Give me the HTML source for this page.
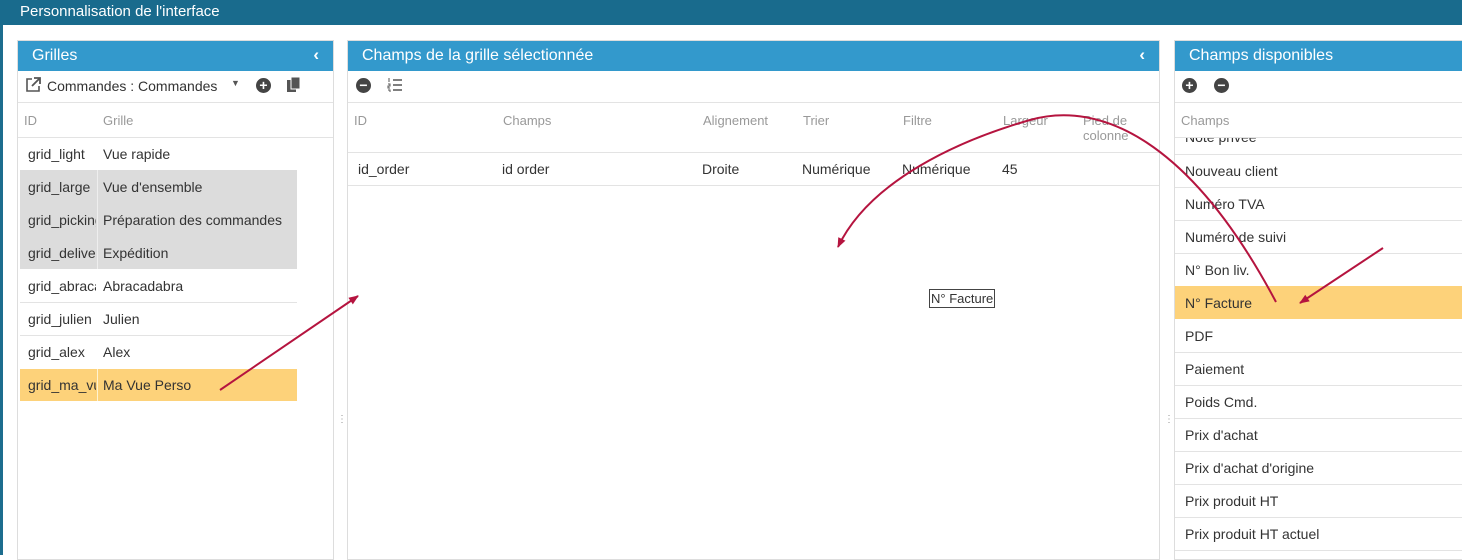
<!DOCTYPE html>
<html><head><meta charset="utf-8"><style>
*{box-sizing:border-box;margin:0;padding:0}
body{width:1462px;height:555px;overflow:hidden;background:#fff;font-family:"Liberation Sans",Arial,sans-serif;position:relative;color:#333}
.top{position:absolute;left:0;top:0;width:1462px;height:25px;background:#196b8d;color:#fff;font-size:15px;padding:3px 0 0 20px}
.edge{position:absolute;left:0;top:25px;width:3px;height:530px;background:#1d6d8e}
.panel{position:absolute;top:40px;height:520px;border:1px solid #ddd;background:#fff}
.hd{height:30px;background:#3399cc;color:#fff;font-size:16px;padding:6px 0 0 14px;position:relative}
.hd .chev{position:absolute;right:14px;top:4px;font-size:17px;font-weight:bold}
.tb{height:32px;border-bottom:1px solid #e3e3e3;position:relative;font-size:14px}
.t{position:absolute;font-size:14px;white-space:nowrap}
.g{color:#999;font-size:13px}
.line{position:absolute;height:1px;background:#e3e3e3}
.ic{position:absolute;width:15px;height:15px;border-radius:50%;background:#444;color:#fff;font-size:14px;line-height:14px;text-align:center;font-weight:bold}
</style></head><body>
<div class="top">Personnalisation de l'interface</div>
<div class="edge"></div>

<div class="panel" style="left:17px;width:317px">
 <div class="hd">Grilles<span class="chev">‹</span></div>
 <div class="tb"></div>
</div>
<svg style="position:absolute;left:25px;top:77px" width="16" height="16" viewBox="0 0 16 16"><path d="M7 2H2v12h12V9" fill="none" stroke="#555" stroke-width="1.6"/><path d="M9 1h6v6M15 1L7 9" fill="none" stroke="#555" stroke-width="1.8"/></svg>
<div class="t" style="left:47px;top:78px">Commandes : Commandes</div>
<div class="t" style="left:231px;top:78px;font-size:9px;color:#555">▼</div>
<div class="ic" style="left:256px;top:78px">+</div>
<svg style="position:absolute;left:287px;top:77px" width="14" height="16" viewBox="0 0 14 16"><rect x="0" y="3" width="9" height="12" fill="#555"/><rect x="4" y="0" width="9" height="12" fill="#555" stroke="#fff" stroke-width="1"/></svg>
<div class="t g" style="left:24px;top:113px">ID</div>
<div class="t g" style="left:103px;top:113px">Grille</div>
<div class="line" style="left:18px;top:137px;width:315px"></div>
<div style="position:absolute;left:20px;top:170px;width:277px;height:99px;background:#dcdcdc"></div>
<div style="position:absolute;left:20px;top:369px;width:277px;height:32px;background:#fdd27a"></div>
<div style="position:absolute;left:97px;top:170px;width:1px;height:99px;background:#eee"></div>
<div style="position:absolute;left:97px;top:369px;width:1px;height:32px;background:#fff3d0"></div>
<div class="line" style="left:20px;top:302px;width:277px"></div>
<div class="line" style="left:20px;top:335px;width:277px"></div>
<div class="t" style="left:28px;top:146px">grid_light</div><div class="t" style="left:103px;top:146px">Vue rapide</div>
<div class="t" style="left:28px;top:179px">grid_large</div><div class="t" style="left:103px;top:179px">Vue d'ensemble</div>
<div class="t" style="left:28px;top:212px;width:68px;overflow:hidden">grid_picking</div><div class="t" style="left:103px;top:212px">Préparation des commandes</div>
<div class="t" style="left:28px;top:245px;width:68px;overflow:hidden">grid_delivery</div><div class="t" style="left:103px;top:245px">Expédition</div>
<div class="t" style="left:28px;top:278px;width:68px;overflow:hidden">grid_abracadabra</div><div class="t" style="left:103px;top:278px">Abracadabra</div>
<div class="t" style="left:28px;top:311px;width:68px;overflow:hidden">grid_julien</div><div class="t" style="left:103px;top:311px">Julien</div>
<div class="t" style="left:28px;top:344px">grid_alex</div><div class="t" style="left:103px;top:344px">Alex</div>
<div class="t" style="left:28px;top:377px;width:68px;overflow:hidden">grid_ma_vue</div><div class="t" style="left:103px;top:377px">Ma Vue Perso</div>
<div class="t" style="left:337px;top:414px;color:#999;font-size:10px">⋮</div>
<div class="t" style="left:1164px;top:414px;color:#999;font-size:10px">⋮</div>

<div class="panel" style="left:347px;width:813px">
 <div class="hd">Champs de la grille sélectionnée<span class="chev">‹</span></div>
 <div class="tb"></div>
</div>
<div class="ic" style="left:356px;top:78px">−</div>
<svg style="position:absolute;left:387px;top:77px" width="16" height="16" viewBox="0 0 16 16"><path d="M6 3h9M6 8h9M6 13h9" stroke="#555" stroke-width="1.5"/><path d="M2 1v4M1 7h2v2H1v2h2M1 13h2v2" stroke="#555" stroke-width="1" fill="none"/></svg>
<div class="t g" style="left:354px;top:113px">ID</div>
<div class="t g" style="left:503px;top:113px">Champs</div>
<div class="t g" style="left:703px;top:113px">Alignement</div>
<div class="t g" style="left:803px;top:113px">Trier</div>
<div class="t g" style="left:903px;top:113px">Filtre</div>
<div class="t g" style="left:1003px;top:113px">Largeur</div>
<div class="t g" style="left:1083px;top:113px;line-height:15px">Pied de<br>colonne</div>
<div class="line" style="left:348px;top:152px;width:811px"></div>
<div class="line" style="left:348px;top:185px;width:811px"></div>
<div class="t" style="left:358px;top:161px">id_order</div>
<div class="t" style="left:502px;top:161px">id order</div>
<div class="t" style="left:702px;top:161px">Droite</div>
<div class="t" style="left:802px;top:161px">Numérique</div>
<div class="t" style="left:902px;top:161px">Numérique</div>
<div class="t" style="left:1002px;top:161px">45</div>
<div class="t" style="left:929px;top:289px;border:1px solid #444;padding:1px 1px;font-size:13px;background:#fff">N° Facture</div>

<div class="panel" style="left:1174px;width:300px">
 <div class="hd">Champs disponibles</div>
 <div class="tb"></div>
</div>
<div class="ic" style="left:1182px;top:78px">+</div>
<div class="ic" style="left:1214px;top:78px">−</div>
<div class="t g" style="left:1181px;top:113px">Champs</div>
<div style="position:absolute;left:1175px;top:137px;width:287px;height:17px;overflow:hidden;border-top:1px solid #e3e3e3"><div class="t" style="left:10px;top:-9px">Note privée</div></div>
<div style="position:absolute;left:1175px;top:286px;width:287px;height:33px;background:#fdd27a"></div>
<div class="line" style="left:1175px;top:154px;width:287px"></div>
<div class="line" style="left:1175px;top:187px;width:287px"></div>
<div class="line" style="left:1175px;top:220px;width:287px"></div>
<div class="line" style="left:1175px;top:253px;width:287px"></div>
<div class="line" style="left:1175px;top:352px;width:287px"></div>
<div class="line" style="left:1175px;top:385px;width:287px"></div>
<div class="line" style="left:1175px;top:418px;width:287px"></div>
<div class="line" style="left:1175px;top:451px;width:287px"></div>
<div class="line" style="left:1175px;top:484px;width:287px"></div>
<div class="line" style="left:1175px;top:517px;width:287px"></div>
<div class="line" style="left:1175px;top:550px;width:287px"></div>
<div class="t" style="left:1185px;top:163px">Nouveau client</div>
<div class="t" style="left:1185px;top:196px">Numéro TVA</div>
<div class="t" style="left:1185px;top:229px">Numéro de suivi</div>
<div class="t" style="left:1185px;top:262px">N° Bon liv.</div>
<div class="t" style="left:1185px;top:295px">N° Facture</div>
<div class="t" style="left:1185px;top:328px">PDF</div>
<div class="t" style="left:1185px;top:361px">Paiement</div>
<div class="t" style="left:1185px;top:394px">Poids Cmd.</div>
<div class="t" style="left:1185px;top:427px">Prix d'achat</div>
<div class="t" style="left:1185px;top:460px">Prix d'achat d'origine</div>
<div class="t" style="left:1185px;top:493px">Prix produit HT</div>
<div class="t" style="left:1185px;top:526px">Prix produit HT actuel</div>

<svg style="position:absolute;left:0;top:0" width="1462" height="555">
<defs><marker id="a" markerWidth="10" markerHeight="8" refX="9" refY="4" orient="auto" markerUnits="userSpaceOnUse"><path d="M0 0L10 4L0 8z" fill="#b5143f"/></marker></defs>
<g stroke="#b5143f" stroke-width="2" fill="none">
<path d="M220 390L358 296" marker-end="url(#a)"/>
<path d="M1276 302C1190 140 1100 100 1030 120C960 140 870 180 838 247" marker-end="url(#a)"/>
<path d="M1383 248L1300 303" marker-end="url(#a)"/>
</g></svg>
</body></html>
